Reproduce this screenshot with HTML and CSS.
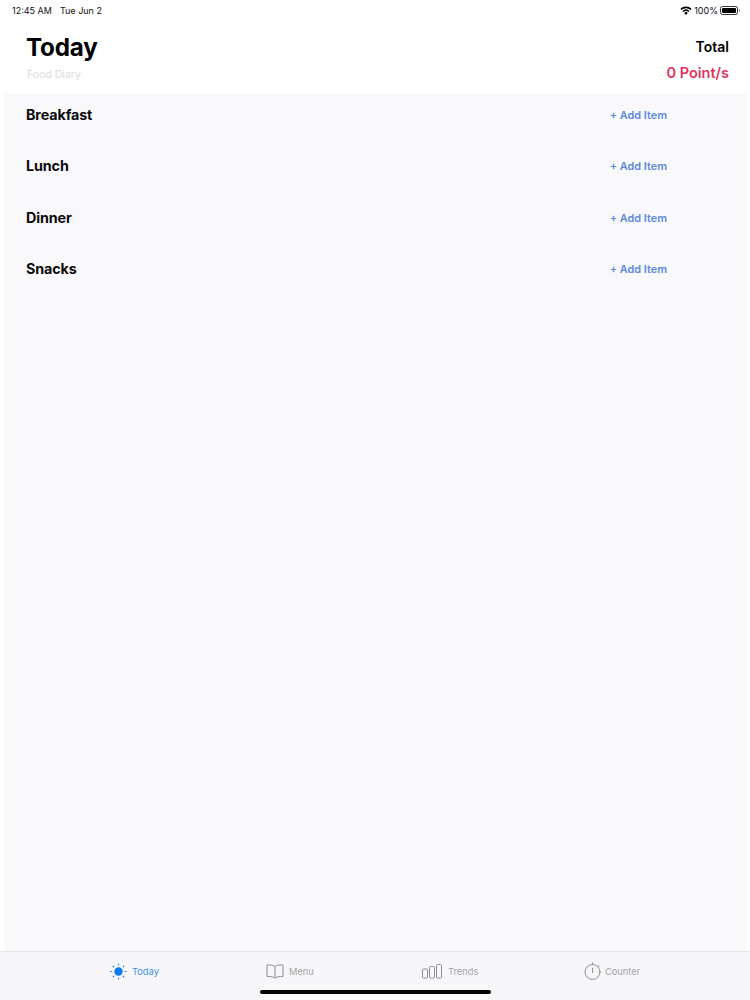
FILE: index.html
```html
<!DOCTYPE html>
<html lang="en">
<head>
  <meta charset="UTF-8" />
  <title>Today</title>
  <link rel="stylesheet" href="styles.css">
</head>
<body>
  <div class="app">
    <div class="status">
      <div class="status-left"><span>12:45 AM</span><span>Tue Jun 2</span></div>
      <div class="status-right">
        <svg class="wifi" width="12" height="9" viewBox="0 0 12 9"><path d="M6 9 4.2 6.9a2.7 2.7 0 0 1 3.6 0zM3.4 6 2.4 4.9a5.4 5.4 0 0 1 7.2 0L8.6 6a4 4 0 0 0-5.2 0zM1.6 4 .4 2.8a8.2 8.2 0 0 1 11.2 0L10.4 4a6.6 6.6 0 0 0-8.8 0z" fill="#000"/></svg>
        <span>100%</span>
        <span class="battery"><span class="battery-fill"></span></span>
      </div>
    </div>

    <header class="head">
      <div>
        <h1>Today</h1>
        <div class="sub">Food Diary</div>
      </div>
      <div class="total">
        <div class="total-label">Total</div>
        <div class="total-points">0 Point/s</div>
      </div>
    </header>

    <main class="list">
      <div class="row"><h2>Breakfast</h2><a class="add">+ Add Item</a></div>
      <div class="row"><h2>Lunch</h2><a class="add">+ Add Item</a></div>
      <div class="row"><h2>Dinner</h2><a class="add">+ Add Item</a></div>
      <div class="row"><h2>Snacks</h2><a class="add">+ Add Item</a></div>
    </main>

    <nav class="tabs">
      <div class="tab tab-today active">
        <svg width="17" height="17" viewBox="0 0 18 18" fill="none" stroke="#0a7cf0" stroke-width="1.2" stroke-linecap="round">
          <circle cx="9" cy="9" r="4.4" fill="#0a7cf0" stroke="none"/>
          <path d="M9 1v.8M9 16.2v.8M1 9h.8M16.2 9h.8M3.4 3.4l.6.6M14 14l.6.6M3.4 14.6l.6-.6M14 4l.6-.6"/>
        </svg>
        <span>Today</span>
      </div>
      <div class="tab tab-menu">
        <svg width="18" height="15" viewBox="0 0 18 15" fill="none" stroke="#8e8e93" stroke-width="1">
          <path d="M9 2.6C7.6 1.2 4.6.7 1 1v11.6c3.6-.3 6.6.2 8 1.6 1.4-1.4 4.4-1.900 8-1.600V1c-3.600-.3-6.600.2-8 1.600zM9 2.600v11.600"/>
        </svg>
        <span>Menu</span>
      </div>
      <div class="tab tab-trends">
        <svg width="20" height="15" viewBox="0 0 20 15" fill="none" stroke="#8e8e93" stroke-width="1">
          <rect x=".5" y="5" width="5" height="9" rx="1"/>
          <rect x="7.5" y="2.5" width="5" height="11.5" rx="1"/>
          <rect x="14.5" y=".5" width="5" height="13.5" rx="1"/>
        </svg>
        <span>Trends</span>
      </div>
      <div class="tab tab-counter">
        <svg width="17" height="18" viewBox="0 0 17 18" fill="none" stroke="#8e8e93" stroke-width="1" stroke-linecap="round">
          <circle cx="8.5" cy="10" r="7.5"/>
          <path d="M8.5 .8v1.700M14 3.200l1 1M8.500 6v4.500"/>
        </svg>
        <span>Counter</span>
      </div>
      <div class="home-bar"></div>
    </nav>
  </div>
</body>
</html>
```

FILE: styles.css
```css
* { box-sizing: border-box; }
html, body { margin: 0; padding: 0; }
body { font-family: Inter, "Liberation Sans", sans-serif; background: #fff; color: #000; }
h1, h2 { margin: 0; }

.app { width: 750px; height: 1000px; display: flex; flex-direction: column; overflow: hidden; }

.status { height: 20px; padding: 0 12px; display: flex; justify-content: space-between; align-items: center; font-size: 9px; color: #111; }
.status-left { display: flex; gap: 8px; }
.status-right { display: flex; align-items: center; gap: 2px; }
.battery { width: 18px; height: 9px; border: 1px solid #333; border-radius: 2.5px; padding: 1px; position: relative; }
.battery::after { content: ""; position: absolute; right: -3px; top: 2px; width: 1.5px; height: 3px; background: #888; border-radius: 0 1px 1px 0; }
.battery-fill { display: block; height: 100%; background: #000; border-radius: 1px; }

.head { height: 73px; padding: 0 21px 0 26px; display: flex; justify-content: space-between; }
h1 { font-size: 24.2px; font-weight: 700; line-height: 30px; margin-top: 13px; letter-spacing: -0.2px; }
.sub { font-size: 10.5px; color: #dcdce0; margin: 5px 0 0 1px; line-height: 14px; }
.total { text-align: right; font-weight: 600; }
.total-label { font-size: 14px; line-height: 18px; margin-top: 18px; }
.total-points { font-size: 14.5px; line-height: 18px; margin-top: 8px; color: #e0335f; }

.list { flex: 1; background: #f9f8fb; margin: 0 4px; padding: 0 22px; }
.row { height: 51.3px; width: 641px; display: flex; justify-content: space-between; align-items: center; padding-bottom: 7px; }
h2 { font-size: 14.3px; font-weight: 700; line-height: 18px; color: #0a0a0a; letter-spacing: -0.1px; }
.add { font-size: 10.9px; font-weight: 600; color: #5b8bd8; }

.tabs { height: 49px; background: #f7f6f9; border-top: 1px solid #e5e5e8; position: relative; display: flex; }
.tab { position: absolute; top: 10px; height: 18px; display: flex; align-items: center; gap: 5px; font-size: 9.3px; color: #a3a3a8; }
.tab.active { color: #3d8fe0; }
.tab-today { left: 110px; }
.tab-menu { left: 266px; }
.tab-trends { left: 422px; gap: 6px; }
.tab-counter { left: 584px; gap: 4px; }
.home-bar { position: absolute; left: 260px; bottom: 6px; width: 231px; height: 4px; background: #000; border-radius: 2px; }
```
